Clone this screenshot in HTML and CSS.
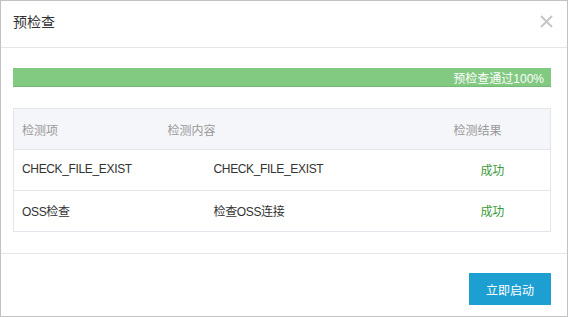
FILE: index.html
```html
<!DOCTYPE html>
<html lang="zh-CN">
<head>
    <meta charset="UTF-8">
    <meta name="viewport" content="width=device-width, initial-scale=1.0">
    <title>预检查</title>
    <link rel="stylesheet" href="styles.css">
</head>
<body>
    <div class="dialog">
        <div class="dialog-header">
            <span class="dialog-title">预检查</span>
            <span class="dialog-close">
                <svg width="13" height="13" viewBox="0 0 13 13"><path d="M1 1L12 12M12 1L1 12" stroke="#c6c6c6" stroke-width="2" fill="none"/></svg>
            </span>
        </div>
        <div class="dialog-body">
            <div class="progress"><span class="progress-text">预检查通过100%</span></div>
            <table class="check-table">
                <thead>
                    <tr>
                        <th class="col-item">检测项</th>
                        <th class="col-content">检测内容</th>
                        <th class="col-result">检测结果</th>
                    </tr>
                </thead>
                <tbody>
                    <tr>
                        <td class="col-item">CHECK_FILE_EXIST</td>
                        <td class="col-content">CHECK_FILE_EXIST</td>
                        <td class="col-result ok">成功</td>
                    </tr>
                    <tr>
                        <td class="col-item">OSS检查</td>
                        <td class="col-content">检查OSS连接</td>
                        <td class="col-result ok">成功</td>
                    </tr>
                </tbody>
            </table>
        </div>
        <div class="dialog-footer">
            <button class="btn-primary">立即启动</button>
        </div>
    </div>
</body>
</html>
```

FILE: styles.css
```css
* {
    box-sizing: border-box;
}
body {
    margin: 0;
    background: #fff;
    font-family: "Liberation Sans", "Noto Sans CJK SC", sans-serif;
    font-size: 12px;
    color: #333;
}
.dialog {
    width: 568px;
    height: 317px;
    border: 1px solid #c2c2c2;
    background: #fff;
}
.dialog-header {
    height: 47px;
    padding: 0 14px 6px 12px;
    border-bottom: 1px solid #e5e5e5;
    display: flex;
    justify-content: space-between;
    align-items: center;
}
.dialog-title {
    font-size: 14px;
    color: #333;
}
.dialog-close {
    display: flex;
    margin-top: 1px;
}
.dialog-body {
    padding: 20px 16px 20px 12px;
    height: 206px;
    border-bottom: 1px solid #e5e5e5;
}
.progress {
    height: 19px;
    background: #82c982;
    border-bottom: 1px solid #74b875;
    display: flex;
    justify-content: flex-end;
    align-items: center;
    padding-right: 7px;
}
.progress-text {
    color: #fff;
    font-size: 12px;
}
.check-table {
    width: 100%;
    margin-top: 21px;
    border-collapse: collapse;
    border: 1px solid #e3e5ea;
}
.check-table th,
.check-table td {
    height: 41px;
    text-align: left;
    padding: 0 0 0 8px;
    font-weight: normal;
    border-bottom: 1px solid #e3e5ea;
}
.check-table td {
    letter-spacing: -0.35px;
    padding-bottom: 2px;
}
.check-table thead tr {
    background: #f5f6f9;
}
.check-table th {
    color: #999;
}
.check-table .col-item {
    width: 146px;
}
.check-table .col-content {
    width: 286px;
}
.check-table td.col-content {
    padding-left: 54px;
}
.check-table td.col-result {
    padding-left: 35px;
}
.check-table .ok {
    color: #3a9a3a;
}
.dialog-footer {
    display: flex;
    justify-content: flex-end;
    padding: 19px 16px 0 0;
}
.btn-primary {
    width: 82px;
    height: 32px;
    border: none;
    background: #1e9fd2;
    color: #fff;
    font-family: inherit;
    font-size: 12px;
    cursor: pointer;
}
```
